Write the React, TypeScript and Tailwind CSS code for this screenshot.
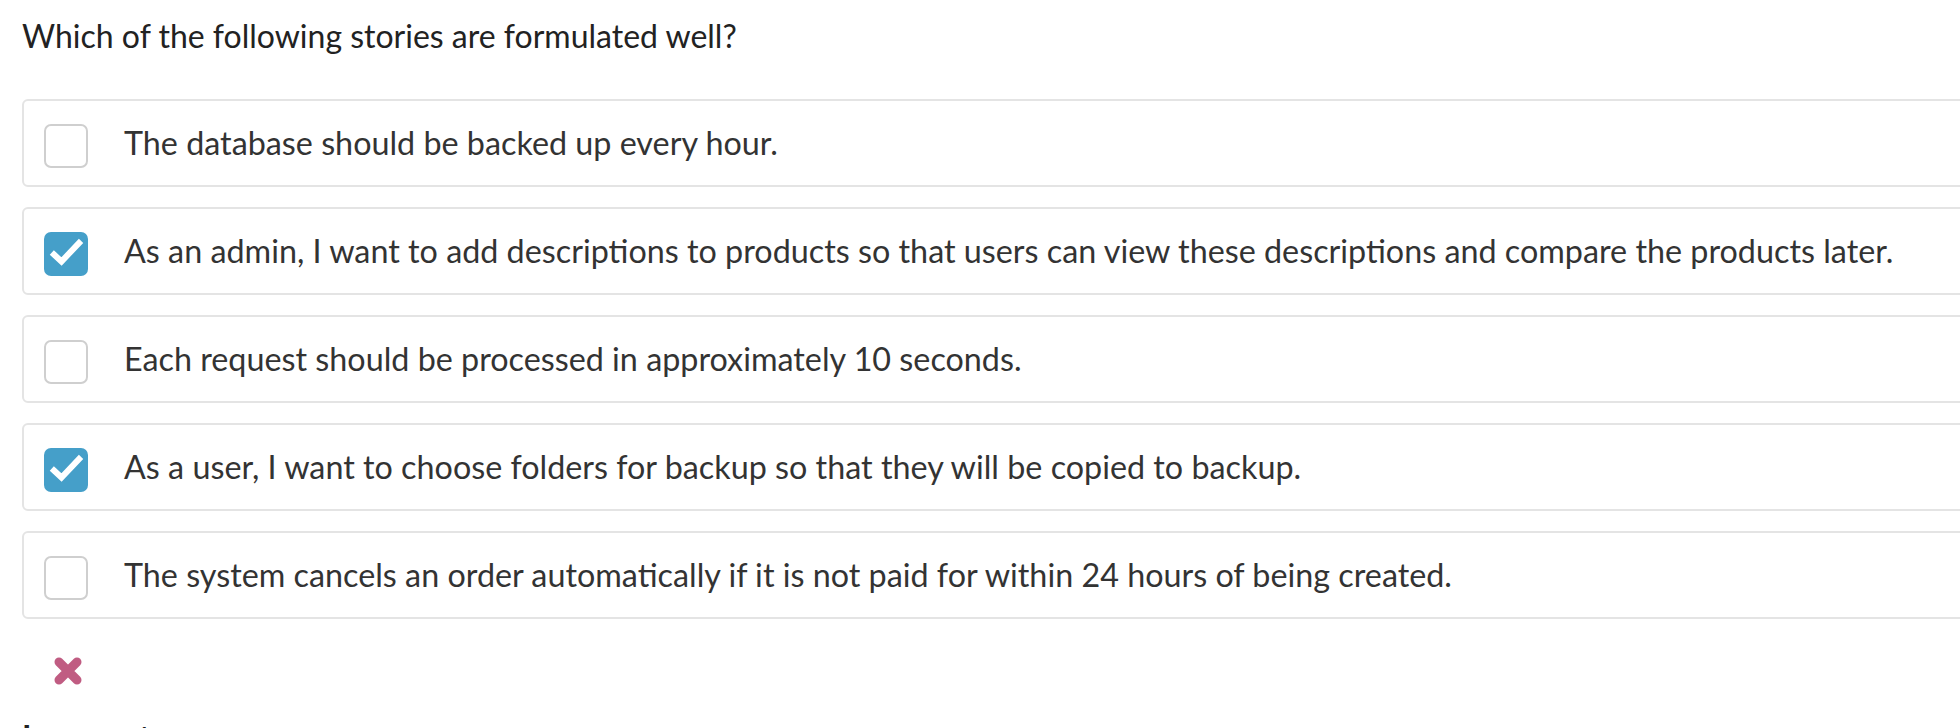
import React from 'react';

const options = [
  { text: 'The database should be backed up every hour.', checked: false },
  {
    text: 'As an admin, I want to add descriptions to products so that users can view these descriptions and compare the products later.',
    checked: true,
  },
  { text: 'Each request should be processed in approximately 10 seconds.', checked: false },
  { text: 'As a user, I want to choose folders for backup so that they will be copied to backup.', checked: true },
  {
    text: 'The system cancels an order automatically if it is not paid for within 24 hours of being created.',
    checked: false,
  },
];

const CheckBox = ({ checked }: { checked: boolean }) => {
  if (checked) {
    return (
      <div className="w-[44px] h-[44px] rounded-[7px] bg-[#459fc9] shrink-0 mt-[6px]">
        <svg width="44" height="44" viewBox="0 0 44 44">
          <path d="M10 22.5 L17.5 29.5 L35 11" fill="none" stroke="#fff" strokeWidth="6" strokeLinecap="square" />
        </svg>
      </div>
    );
  }
  return <div className="w-[44px] h-[44px] rounded-[7px] border-2 border-[#cfcfcf] bg-white shrink-0 mt-[6px]" />;
};

const OptionRow = ({ text, checked }: { text: string; checked: boolean }) => (
  <div className="h-[88px] w-[2000px] border-2 border-[#e4e4e4] rounded-[6px] flex items-center pl-[20px] mb-[20px] bg-white">
    <CheckBox checked={checked} />
    <span className="ml-[36px] text-[#333] text-[32.3px] whitespace-nowrap">{text}</span>
  </div>
);

export default function App() {
  return (
    <div
      className="w-[1960px] h-[728px] overflow-hidden bg-white pl-[22px] pt-[12px] text-[32px] leading-[48px]"
      style={{ fontFamily: 'Lato, "Liberation Sans", sans-serif' }}
    >
      <h1 className="text-[#222] mb-[39px]">Which of the following stories are formulated well?</h1>
      {options.map((o, i) => (
        <OptionRow key={i} text={o.text} checked={o.checked} />
      ))}
      <div className="pl-[30px] pt-[16px]">
        <svg width="32" height="32" viewBox="0 0 32 32">
          <path d="M7 7 L25 25 M25 7 L7 25" stroke="#c05c82" strokeWidth="9" strokeLinecap="round" />
        </svg>
      </div>
      <div className="text-[#222] font-bold mt-[26px]">Incorrect</div>
    </div>
  );
}
